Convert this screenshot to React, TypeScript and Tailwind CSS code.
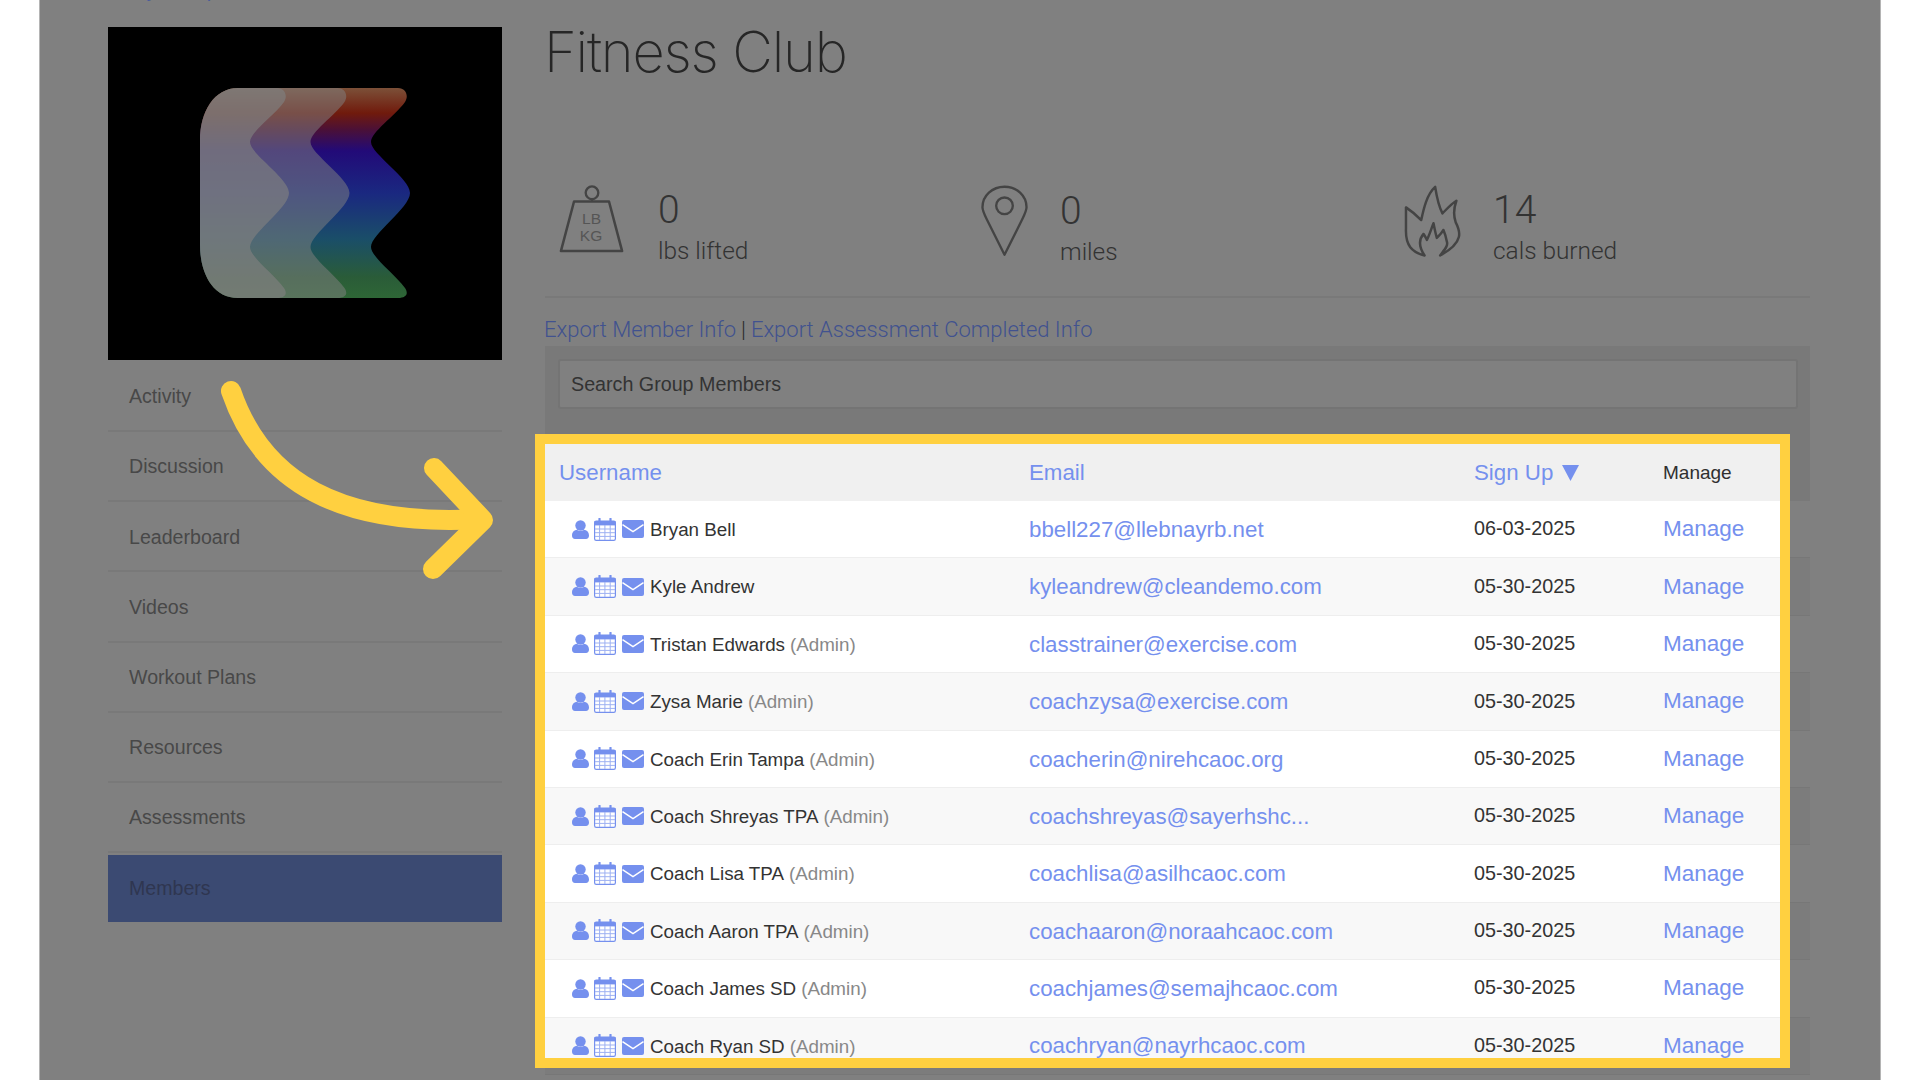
import React from "react";

const members: { name: string; admin?: boolean; email: string; date: string }[] = [
  { name: "Bryan Bell", email: "bbell227@llebnayrb.net", date: "06-03-2025" },
  { name: "Kyle Andrew", email: "kyleandrew@cleandemo.com", date: "05-30-2025" },
  { name: "Tristan Edwards", admin: true, email: "classtrainer@exercise.com", date: "05-30-2025" },
  { name: "Zysa Marie", admin: true, email: "coachzysa@exercise.com", date: "05-30-2025" },
  { name: "Coach Erin Tampa", admin: true, email: "coacherin@nirehcaoc.org", date: "05-30-2025" },
  { name: "Coach Shreyas TPA", admin: true, email: "coachshreyas@sayerhshc...", date: "05-30-2025" },
  { name: "Coach Lisa TPA", admin: true, email: "coachlisa@asilhcaoc.com", date: "05-30-2025" },
  { name: "Coach Aaron TPA", admin: true, email: "coachaaron@noraahcaoc.com", date: "05-30-2025" },
  { name: "Coach James SD", admin: true, email: "coachjames@semajhcaoc.com", date: "05-30-2025" },
  { name: "Coach Ryan SD", admin: true, email: "coachryan@nayrhcaoc.com", date: "05-30-2025" },
];

const nav = ["Discussion", "Leaderboard", "Videos", "Workout Plans", "Resources", "Assessments"];

function wave(dx: number) {
  const x = (v: number) => v + dx;
  return `M238 88 L${x(398)} 88 C${x(406)} 88 ${x(409)} 96 ${x(405)} 102 C${x(395)} 116 ${x(371)} 132 ${x(371)} 142 C${x(371)} 154 ${x(410)} 178 ${x(410)} 193 C${x(410)} 208 ${x(371)} 234 ${x(371)} 247 C${x(371)} 257 ${x(395)} 274 ${x(405)} 288 C${x(409)} 294 ${x(406)} 298 ${x(398)} 298 L238 298 C212 298 200 272 200 245 L200 140 C200 112 214 88 238 88 Z`;
}

function Logo() {
  return (
    <svg viewBox="108 27 394 333" className="block w-[394px] h-[333px] bg-black">
      <defs>
        <linearGradient id="lg" x1="0" y1="88" x2="0" y2="298" gradientUnits="userSpaceOnUse">
          <stop offset="0" stopColor="#7c5038" />
          <stop offset="0.12" stopColor="#701a0c" />
          <stop offset="0.2" stopColor="#4a1038" />
          <stop offset="0.3" stopColor="#220a78" />
          <stop offset="0.5" stopColor="#1a2880" />
          <stop offset="0.72" stopColor="#1a4e68" />
          <stop offset="0.9" stopColor="#2a5c38" />
          <stop offset="1" stopColor="#2e6636" />
        </linearGradient>
      </defs>
      <path d={wave(0)} fill="url(#lg)" />
      <path d={wave(-60.5)} fill="#808080" fillOpacity="0.52" />
      <path d={wave(-121)} fill="#808080" fillOpacity="0.66" />
    </svg>
  );
}

function WeightIcon() {
  return (
    <svg viewBox="0 0 70 72" className="w-[68px] h-[70px] block">
      <circle cx="35" cy="9" r="6.5" fill="none" stroke="#444" strokeWidth="2.4" />
      <path d="M35 15.5 V17.5" stroke="#444" strokeWidth="2.4" />
      <path d="M16.5 18 H52.5 L66 69 H3 Z" fill="none" stroke="#444" strokeWidth="2.6" strokeLinejoin="round" />
      <text x="34.5" y="41" textAnchor="middle" fontFamily="'Liberation Sans', sans-serif" fontSize="16" fill="#555">LB</text>
      <text x="34" y="59" textAnchor="middle" fontFamily="'Liberation Sans', sans-serif" fontSize="16" fill="#555">KG</text>
    </svg>
  );
}

function PinIcon() {
  return (
    <svg viewBox="0 0 48 74" className="w-[47px] h-[73px] block">
      <path d="M24 71 L6 35 C3 29 1.5 25 1.5 22.5 C1.5 10.5 11.5 1.5 24 1.5 C36.5 1.5 46.5 10.5 46.5 22.5 C46.5 25 45 29 42 35 Z" fill="none" stroke="#444" strokeWidth="2.4" strokeLinejoin="round" />
      <circle cx="24" cy="21" r="8.5" fill="none" stroke="#444" strokeWidth="2.4" />
    </svg>
  );
}

function FlameIcon() {
  return (
    <svg viewBox="60 40 190 225" className="w-[63px] h-[75px] block">
      <path
        d="M128 255 C90 245 70 225 72 175 C72 150 72 130 72 110 C90 122 105 135 118 148 C125 115 135 70 160 48 C165 80 170 105 182 128 C195 115 208 100 224 90 C215 115 215 135 222 155 C235 180 250 215 175 255 C190 235 200 225 195 212 C193 200 190 190 185 178 C178 190 172 195 165 202 C160 185 158 172 155 158 C148 175 142 195 135 208 C132 200 128 195 125 190 C112 205 108 225 128 255 Z"
        fill="none"
        stroke="#444"
        strokeWidth="7.5"
        strokeLinejoin="round"
      />
    </svg>
  );
}

function UserIcon() {
  return (
    <svg viewBox="0 0 17 19" className="w-[17px] h-[19px] block shrink-0" fill="#7590ee">
      <circle cx="8.5" cy="5.5" r="5.2" />
      <path d="M0 15.5 C0 12 2.5 10 5 9.8 C6.5 11.4 10.5 11.4 12 9.8 C14.5 10 17 12 17 15.5 C17 17.8 15.8 19 14 19 H3 C1.2 19 0 17.8 0 15.5 Z" />
    </svg>
  );
}

function CalendarIcon() {
  return (
    <svg viewBox="0 0 22 23" className="w-[22px] h-[23px] block shrink-0">
      <rect x="0.6" y="3" width="20.8" height="19.4" rx="1.6" fill="#fff" stroke="#7590ee" strokeWidth="1.2" />
      <rect x="0.6" y="3" width="20.8" height="4.4" fill="#7590ee" />
      <path d="M5.5 0.8 V5 M16.5 0.8 V5" stroke="#7590ee" strokeWidth="2.2" strokeLinecap="round" />
      <path d="M5.6 7 V22 M10.9 7 V22 M16.2 7 V22 M1 11 H21 M1 14.7 H21 M1 18.4 H21" stroke="#9db0f2" strokeWidth="1" />
    </svg>
  );
}

function MailIcon() {
  return (
    <svg viewBox="0 0 22 18" className="w-[22px] h-[18px] block shrink-0">
      <rect width="22" height="18" rx="2" fill="#7590ee" />
      <path d="M0.5 4.6 L11 11.6 L21.5 4.6" fill="none" stroke="#fff" strokeWidth="1.5" />
    </svg>
  );
}

function Arrow() {
  return (
    <svg viewBox="0 0 1920 1080" className="absolute left-0 top-0 w-[1920px] h-[1080px] pointer-events-none" fill="none">
      <path d="M231 391 C262 482 340 527 480 519" stroke="#ffd040" strokeWidth="20" strokeLinecap="round" />
      <path d="M434 468 L483 520 L433 569" stroke="#ffd040" strokeWidth="20" strokeLinecap="round" strokeLinejoin="round" />
    </svg>
  );
}

function Stat({ n, label }: { n: string; label: string }) {
  return (
    <div className="pt-[4px]">
      <div className="text-[39px] leading-[44px]">{n}</div>
      <div className="text-[24.4px] leading-[38px]">{label}</div>
    </div>
  );
}

export default function App() {
  return (
    <div className="relative w-[1920px] h-[1080px] overflow-hidden bg-white font-['Liberation_Sans',sans-serif]">
      <div className="ml-[39px] w-[1842px] h-full bg-[#808080] border-x border-[#b4b4b4] flex">
        <aside className="ml-[68px] w-[394px] shrink-0">
          <div className="h-[27px] overflow-hidden pl-[22px]">
            <span className="block -mt-[22px] text-[20px] leading-[24px] text-[#4a5c9a]">My Groups</span>
          </div>
          <Logo />
          <nav className="text-[19.6px] text-[#484848]">
            <div className="h-[72px] border-b-2 border-[#797979] flex items-center pl-[21px] pt-[3px]">Activity</div>
            {nav.map((n) => (
              <div key={n} className="h-[70.2px] border-b-2 border-[#797979] flex items-center pl-[21px] pt-[2px]">
                {n}
              </div>
            ))}
            <div className="mt-[2px] h-[67px] bg-[#3b4a72] flex items-center pl-[21px] pt-[1px] text-[#2f3650]">Members</div>
          </nav>
        </aside>
        <main className="relative ml-[43px] w-[1265px] shrink-0">
          <div className="h-[184px]">
            <h1 className="pt-[18px] -ml-[1px] font-['Inter',sans-serif] font-extralight text-[56px] leading-[68px] tracking-[-1.2px] text-[#262626]">
              Fitness Club
            </h1>
          </div>
          <div className="h-[114px] flex border-b-2 border-[#797979] text-[#333] font-['Roboto',sans-serif] font-light">
            <div className="w-[422px] flex pl-[13px]">
              <div className="w-[100px] shrink-0"><WeightIcon /></div>
              <Stat n="0" label="lbs lifted" />
            </div>
            <div className="w-[422px] flex pl-[14px] pt-[1px]">
              <div className="w-[79px] shrink-0"><PinIcon /></div>
              <Stat n="0" label="miles" />
            </div>
            <div className="w-[421px] flex pl-[13px]">
              <div className="w-[91px] shrink-0"><FlameIcon /></div>
              <Stat n="14" label="cals burned" />
            </div>
          </div>
          <div className="h-[48px] flex items-center pt-[15px] -ml-[1px] font-['Roboto',sans-serif] font-light text-[22px] text-[#41528f]">
            <span>Export Member Info</span>
            <span className="mx-[5px] text-[#2a2a2a]">|</span>
            <span>Export Assessment Completed Info</span>
          </div>
          <div className="h-[155px] bg-[#797979] pt-[13px] pl-[13px] pr-[12px]">
            <div className="h-[50px] bg-[#808080] border-2 border-[#747474] rounded-[3px] flex items-center pl-[11px] pt-[1px] text-[19.7px] text-[#333]">
              Search Group Members
            </div>
          </div>
          <div>
            {members.map((m, i) => (
              <div key={m.email} className={`h-[57.4px] border-b border-[#777] ${i % 2 ? "bg-[#7c7c7c]" : "bg-[#808080]"}`} />
            ))}
          </div>
          <div className="absolute left-[-10px] top-[434px] w-[1255px] h-[634px] border-[10px] border-[#ffd040] bg-white overflow-hidden">
            <div className="h-[57px] pt-[1px] bg-[#f0f0f0] grid grid-cols-[484px_445px_189px_117px] items-center text-[22.3px] text-[#7590ee]">
              <span className="pl-[14px]">Username</span>
              <span>Email</span>
              <span className="flex items-center gap-[9px]">
                Sign Up
                <svg viewBox="0 0 17 16" className="w-[17px] h-[16px]"><path d="M0 0 H17 L8.5 16 Z" fill="#7590ee" /></svg>
              </span>
              <span className="text-[19px] text-[#2f2f2f]">Manage</span>
            </div>
            {members.map((m, i) => (
              <div
                key={m.email}
                className={`h-[57.4px] grid grid-cols-[484px_445px_189px_117px] items-center border-b border-[#eeeeee] ${i % 2 ? "bg-[#f8f8f8]" : "bg-white"}`}
              >
                <div className="flex items-center pl-[27px]">
                  <UserIcon />
                  <span className="ml-[5px]"><CalendarIcon /></span>
                  <span className="ml-[6px]"><MailIcon /></span>
                  <span className="ml-[6px] pt-[2px] text-[18.8px] text-[#333] whitespace-nowrap">
                    {m.name}
                    {m.admin && <span className="text-[#888] ml-[5px]">(Admin)</span>}
                  </span>
                </div>
                <span className="pt-[1px] text-[22.3px] text-[#7590ee] whitespace-nowrap">{m.email}</span>
                <span className="text-[19.8px] text-[#333]">{m.date}</span>
                <span className="text-[22.5px] text-[#7590ee]">Manage</span>
              </div>
            ))}
          </div>
        </main>
      </div>
      <Arrow />
    </div>
  );
}
